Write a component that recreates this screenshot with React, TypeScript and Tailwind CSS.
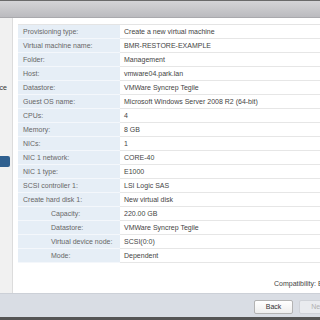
const rows: { label: string; value: string; indent?: boolean }[] = [
  { label: "Provisioning type:", value: "Create a new virtual machine" },
  { label: "Virtual machine name:", value: "BMR-RESTORE-EXAMPLE" },
  { label: "Folder:", value: "Management" },
  { label: "Host:", value: "vmware04.park.lan" },
  { label: "Datastore:", value: "VMWare Syncrep Tegile" },
  { label: "Guest OS name:", value: "Microsoft Windows Server 2008 R2 (64-bit)" },
  { label: "CPUs:", value: "4" },
  { label: "Memory:", value: "8 GB" },
  { label: "NICs:", value: "1" },
  { label: "NIC 1 network:", value: "CORE-40" },
  { label: "NIC 1 type:", value: "E1000" },
  { label: "SCSI controller 1:", value: "LSI Logic SAS" },
  { label: "Create hard disk 1:", value: "New virtual disk" },
  { label: "Capacity:", value: "220.00 GB", indent: true },
  { label: "Datastore:", value: "VMWare Syncrep Tegile", indent: true },
  { label: "Virtual device node:", value: "SCSI(0:0)", indent: true },
  { label: "Mode:", value: "Dependent", indent: true },
];

export default function App() {
  return (
    <div className="w-[320px] h-[320px] overflow-hidden flex flex-col bg-white font-['Liberation_Sans',Arial,sans-serif] text-[7px]">
      {/* title bar */}
      <div className="h-[18px] shrink-0 border-t border-[#6a6a6a] bg-gradient-to-b from-[#d4d4d7] to-[#bbbbbf] border-b border-b-[#a9a9ad]" />

      <div className="flex flex-1 min-h-0">
        {/* wizard steps */}
        <div className="w-[13px] shrink-0 bg-[#f1f1f1] border-r border-[#dcdcdc] flex flex-col overflow-hidden">
          <div className="mt-[65px] h-[10px] flex justify-end pr-[5px] whitespace-nowrap text-[#333] leading-[10px]">
            Select a compute resource
          </div>
          <div className="mt-[63px] h-[11px] w-[10px] rounded-r-[2px] bg-[#30608f]" />
        </div>

        {/* review */}
        <div className="flex-1 min-w-0 pl-[5px] pt-[6px] flex flex-col">
          <div className="w-[420px] border-t border-[#e4e4e4]">
            {rows.map((r, i) => (
              <div key={i} className="flex h-[14px]">
                <div
                  className={
                    "w-[102px] shrink-0 bg-[#e6eef6] border-b border-[#f4f7fb] text-[#666] leading-[13px] whitespace-nowrap " +
                    (r.indent ? "pl-[33px]" : "pl-[5px]")
                  }
                >
                  {r.label}
                </div>
                <div className="flex-1 border-b border-[#e6e6e6] pl-[4px] text-[#444] leading-[13px] whitespace-nowrap">
                  {r.value}
                </div>
              </div>
            ))}
          </div>
          <div className="mt-[16px] pl-[256px] leading-[10px] whitespace-nowrap text-[#444]">
            Compatibility: ESXi 6.5 and later (VM version 13)
          </div>
        </div>
      </div>

      {/* footer */}
      <div className="h-[27px] shrink-0 bg-[#d9dde4] border-t border-[#ccd0d7] border-b-[3px] border-b-[#555] flex items-start pt-[6px] pl-[254px] gap-[6px]">
        <button className="w-[39px] h-[14px] shrink-0 rounded-[2px] border border-[#b3b3b3] bg-gradient-to-b from-white to-[#eeeeee] text-[#333] text-[7px] leading-[12px]">
          Back
        </button>
        <button className="w-[39px] h-[14px] shrink-0 rounded-[2px] border border-[#cfd2d8] bg-[#e9ebef] text-[#b0b0b0] text-[7px] leading-[12px]">
          Next
        </button>
      </div>
    </div>
  );
}
